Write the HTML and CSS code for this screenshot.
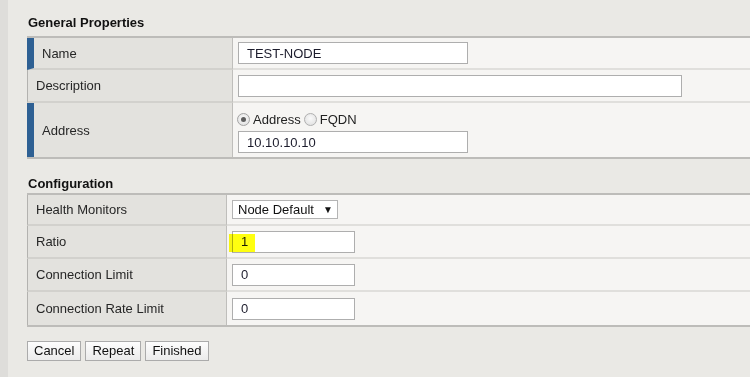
FILE: index.html
```html
<!DOCTYPE html>
<html>
<head>
<meta charset="utf-8">
<link rel="stylesheet" href="styles.css">
</head>
<body>
<div class="page">
  <div class="strip"></div>
  <main class="content">
    <h2 class="section-title first">General Properties</h2>
    <table class="props props-general">
      <tr class="r-name">
        <td class="label required">Name</td>
        <td class="value"><input class="field field-short" type="text" value="TEST-NODE"></td>
      </tr>
      <tr class="r-desc">
        <td class="label">Description</td>
        <td class="value"><input class="field field-long" type="text" value=""></td>
      </tr>
      <tr class="r-addr last">
        <td class="label required">Address</td>
        <td class="value">
          <div class="radios">
            <span class="radio checked"></span><span class="radio-text">Address</span>
            <span class="radio"></span><span class="radio-text">FQDN</span>
          </div>
          <input class="field field-short" type="text" value="10.10.10.10">
        </td>
      </tr>
    </table>

    <h2 class="section-title second">Configuration</h2>
    <table class="props props-config">
      <tr class="r-hm">
        <td class="label">Health Monitors</td>
        <td class="value">
          <div class="select"><span>Node Default</span><span class="arrow">▼</span></div>
        </td>
      </tr>
      <tr class="r-cfg">
        <td class="label">Ratio</td>
        <td class="value">
          <div class="hl-wrap">
            <input class="field field-num" type="text" value="1">
            <span class="highlight"></span>
          </div>
        </td>
      </tr>
      <tr class="r-cfg">
        <td class="label">Connection Limit</td>
        <td class="value"><input class="field field-num" type="text" value="0"></td>
      </tr>
      <tr class="r-cfg last">
        <td class="label">Connection Rate Limit</td>
        <td class="value"><input class="field field-num" type="text" value="0"></td>
      </tr>
    </table>

    <div class="buttons">
      <button class="btn">Cancel</button>
      <button class="btn">Repeat</button>
      <button class="btn">Finished</button>
    </div>
  </main>
</div>
</body>
</html>
```

FILE: styles.css
```css
* { box-sizing: border-box; }
html, body {
  margin: 0;
  padding: 0;
  height: 100%;
  overflow: hidden;
  background: #eae9e5;
  font-family: "Liberation Sans", Arial, sans-serif;
  font-size: 13px;
  color: #222;
}
.page {
  display: flex;
  height: 100%;
}
.strip {
  width: 8px;
  flex: 0 0 8px;
  background: #dedddA;
}
.content {
  flex: 1;
  padding-left: 19px;
  min-width: 0;
}
.section-title {
  margin: 0;
  font-size: 13px;
  line-height: 15px;
  font-weight: bold;
  color: #111;
  padding-left: 1px;
}
.section-title.first { margin-top: 15px; margin-bottom: 6px; }
.section-title.second { margin-top: 17px; margin-bottom: 2px; }

.props {
  border-collapse: separate;
  border-spacing: 0;
  width: 760px;
  border-top: 2px solid #bdbcb9;
  border-bottom: 2px solid #bdbcb9;
}
.props td {
  padding: 0;
  border-bottom: 2px solid #e0dfdc;
  vertical-align: middle;
}
.props tr.last td { border-bottom: 0; }
.props .label {
  background: #e3e2de;
  border-left: 1px solid #b3b2af;
  border-right: 1px solid #bfbebb;
  border-bottom-color: #d2d1cd;
  padding-left: 8px;
  color: #262626;
}
.props .label.required {
  border-left: 7px solid #2e6093;
}
.props .value {
  background: #f6f5f3;
  padding-left: 5px;
}
.props-general .label { width: 206px; }
.props-config .label { width: 200px; }

.r-name td { height: 32px; }
.r-desc td { height: 33px; }
.r-addr td { height: 54px; }
.r-addr .value {
  vertical-align: top;
  padding-top: 10px;
}
.r-hm td { height: 31px; }
.r-cfg td { height: 33px; }

.field {
  display: block;
  height: 22px;
  border: 1px solid #aeaeae;
  background: #fff;
  font-family: "Liberation Sans", Arial, sans-serif;
  font-size: 13px;
  color: #1c1c2c;
  padding: 0 0 0 8px;
  margin: 0;
  outline: none;
}
.field-short { width: 230px; }
.field-long { width: 444px; }
.field-num { width: 123px; }

.radios {
  display: flex;
  align-items: center;
  height: 13px;
  margin-bottom: 5px;
  margin-left: -1px;
}
.radio {
  width: 13px;
  height: 13px;
  border-radius: 50%;
  border: 1px solid #b0b0b0;
  background: radial-gradient(circle at 50% 40%, #fafafa, #dcdcdc);
  position: relative;
  margin-right: 3px;
}
.radio.checked {
  border-color: #a3a3a3;
}
.radio.checked::after {
  content: "";
  position: absolute;
  left: 3px;
  top: 3px;
  width: 5px;
  height: 5px;
  border-radius: 50%;
  background: #5e5e5e;
}
.radio-text { margin-right: 3px; color: #222; }

.select {
  display: inline-flex;
  align-items: center;
  height: 19px;
  width: 106px;
  border: 1px solid #b4b4b4;
  background: #fff;
  padding-left: 5px;
  color: #111;
}
.select .arrow {
  font-size: 10px;
  margin-left: 9px;
  color: #111;
}

.hl-wrap {
  position: relative;
  width: 123px;
}
.highlight {
  position: absolute;
  left: -3px;
  top: 3px;
  width: 26px;
  height: 18px;
  background: #ffff10;
  mix-blend-mode: multiply;
  pointer-events: none;
}

.buttons {
  display: flex;
  gap: 4px;
  margin-top: 14px;
}
.btn {
  font-family: "Liberation Sans", Arial, sans-serif;
  font-size: 13px;
  height: 20px;
  padding: 0 6px;
  border: 1px solid #ababab;
  background: linear-gradient(#fdfdfd, #ebebeb);
  color: #111;
  line-height: 18px;
}
```
